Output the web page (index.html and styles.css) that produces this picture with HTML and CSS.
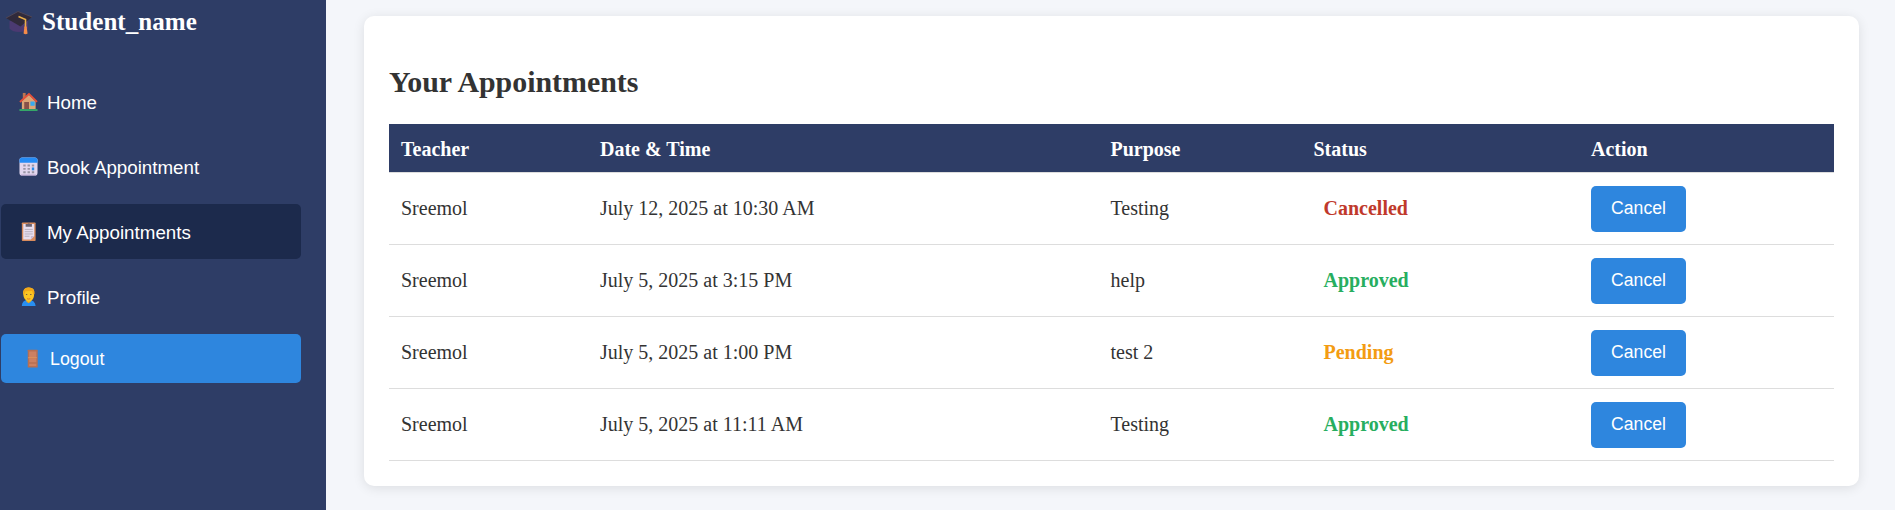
FILE: index.html
```html
<!DOCTYPE html>
<html lang="en">
<head>
<meta charset="utf-8">
<title>Your Appointments</title>
<link rel="stylesheet" href="styles.css">
</head>
<body>
<div class="layout">
  <aside class="sidebar">
    <h2 class="brand">
      <svg class="brand-icon" viewBox="0 0 26 24">
        <path d="M3.500 10v7.500q3 3.500 9.500 3.500t9-3.500V9z" fill="#4b3a72"/>
        <path d="M0 7 12 0.500 26 6 14.500 15.500z" fill="#302a3b"/>
        <path d="M0 7 12 0.500 26 6" fill="none" stroke="#594b55" stroke-width=".8"/>
        <path d="M12.500 5.500 19.500 8.500V17" fill="none" stroke="#e8ae48" stroke-width="1.600"/>
        <path d="M18.400 15.500h2.200l1 7q-2 1.500-4 0z" fill="#f58b49"/>
      </svg>
      <span>Student_name</span>
    </h2>
    <nav class="nav">
      <a class="nav-item">
        <svg class="nav-icon" viewBox="0 0 20 20">
          <path d="M4 1h3v6H4z" fill="#bd7450"/>
          <path d="M3 9.500 10.500 3 17.500 10v8H3z" fill="#dda576"/>
          <path d="M1 10.500 10.500 2l8.500 8.500" fill="none" stroke="#e94f38" stroke-width="1.900"/>
          <path d="M5.500 10.500h5V18h-5z" fill="#895149"/>
          <path d="M12 10h4.500v4.500H12z" fill="#36aaf0"/>
          <path d="M.500 18h19v2H.500z" fill="#35a768"/>
        </svg>
        <span class="nav-label">Home</span>
      </a>
      <a class="nav-item">
        <svg class="nav-icon" viewBox="0 0 20 20">
          <rect x=".500" y=".500" width="19" height="19" rx="3" fill="#e2d7ee"/>
          <path d="M.500 6V3.500q0-3 3-3h13q3 0 3 3V6z" fill="#258cf5"/>
          <path d="M2 19h16" stroke="#b9a1cb"/>
          <path d="M4.500 8H7v2H4.500zM9 8h2.500v2H9zM13.500 8H16v2h-2.500zM4.500 11.500H7v2H4.500zM9 11.500h2.500v2H9zM4.500 15H7v2H4.500zM9 15h2.500v2H9zM13.500 15H16v2h-2.500z" fill="#9995a5"/>
          <path d="M13.500 11H16v3h-2.500z" fill="#2889e8"/>
        </svg>
        <span class="nav-label">Book Appointment</span>
      </a>
      <a class="nav-item active">
        <svg class="nav-icon" viewBox="0 0 20 20">
          <rect x="3" y=".500" width="14.500" height="19.500" rx=".8" fill="#d88b5c"/>
          <path d="M4.500 2.200H16V15l-3.500 3.500h-8z" fill="#e7deef"/>
          <path d="M12.500 14.800H16l-3.500 3.600z" fill="#c9bad4"/>
          <path d="M7 2h2q1.300-1.500 2.600 0h2v3H7z" fill="#6b6371"/>
          <path d="M6 7.800h8.500M6 10.200h8.500M6 12.600h8.500M6 15h5" stroke="#b6aebd"/>
        </svg>
        <span class="nav-label">My Appointments</span>
      </a>
      <a class="nav-item">
        <svg class="nav-icon" viewBox="0 0 20 20">
          <path d="M3 20q0-6 7-6.500 7 .5 7.500 6.500z" fill="#298ff1"/>
          <path d="M7.800 12h4.600v3.500L10.100 17l-2.300-1.500z" fill="#eea51c"/>
          <path d="M4.500 8Q3.500.8 10 .6q7-.3 6 6.400-.2 7.500-5.500 8.500Q5 14.500 4.500 8z" fill="#fcc521"/>
          <path d="M4.500 7Q4 1.200 9.500.6q7-.4 6.800 6.400l-1.200 1-1.300-3.800-7 .3L5.500 8z" fill="#f2a719"/>
          <path d="M7.300 7.800h1.400M11.700 7.800h1.400" stroke="#7a5c49" stroke-width="1.100"/>
          <path d="M8.500 12.300q1.700.8 3.400 0" fill="none" stroke="#dc7529"/>
        </svg>
        <span class="nav-label">Profile</span>
      </a>
      <button class="logout">
        <svg class="nav-icon" viewBox="0 0 20 20">
          <rect x="5" y=".800" width="10.500" height="18.800" rx=".5" fill="#b66f53"/>
          <path d="M6.500 2.500H14v5.800H6.500zM6.500 10H14v4H6.500zM6.500 15.500H14V18H6.500z" fill="#cb8062"/>
          <path d="M5.500 9.200h9" stroke="#e89b60"/>
        </svg>
        <span>Logout</span>
      </button>
    </nav>
  </aside>
  <main class="main">
    <section class="card">
      <h2 class="card-title">Your Appointments</h2>
      <table class="appointments">
        <colgroup><col class="col-teacher"><col class="col-date"><col class="col-purpose"><col class="col-status"><col></colgroup>
        <thead>
          <tr><th>Teacher</th><th>Date &amp; Time</th><th>Purpose</th><th>Status</th><th>Action</th></tr>
        </thead>
        <tbody>
          <tr><td>Sreemol</td><td>July 12, 2025 at 10:30 AM</td><td>Testing</td><td><span class="status cancelled">Cancelled</span></td><td><button class="cancel">Cancel</button></td></tr>
          <tr><td>Sreemol</td><td>July 5, 2025 at 3:15 PM</td><td>help</td><td><span class="status approved">Approved</span></td><td><button class="cancel">Cancel</button></td></tr>
          <tr><td>Sreemol</td><td>July 5, 2025 at 1:00 PM</td><td>test 2</td><td><span class="status pending">Pending</span></td><td><button class="cancel">Cancel</button></td></tr>
          <tr><td>Sreemol</td><td>July 5, 2025 at 11:11 AM</td><td>Testing</td><td><span class="status approved">Approved</span></td><td><button class="cancel">Cancel</button></td></tr>
        </tbody>
      </table>
    </section>
  </main>
</div>
</body>
</html>
```
FILE: styles.css
```css
* { box-sizing: border-box; }

body {
  margin: 0;
  background: #f4f6fa;
  color: #333;
  font-family: "Liberation Serif", "Times New Roman", serif;
  font-size: 20px;
}

.layout {
  display: flex;
  height: 510px;
  overflow: hidden;
}

.sidebar {
  flex: none;
  width: 326px;
  padding: 8px 25px 0 1px;
  background: #2e3d66;
  color: #fff;
}

.brand {
  display: flex;
  gap: 10px;
  margin: 0 0 38px;
  padding-left: 5px;
  font-size: 25px;
  line-height: 28px;
  letter-spacing: 0.05px;
}

.brand-icon {
  flex: none;
  width: 26px;
  height: 24px;
  margin-top: 3px;
}

.nav {
  display: flex;
  flex-direction: column;
  gap: 10px;
}

.nav-item,
.logout {
  display: flex;
  align-items: center;
  gap: 8px;
  height: 55px;
  padding: 0 18px;
  border-radius: 5px;
  color: #fff;
  font: 18.75px/22px "Liberation Sans", Arial, sans-serif;
}

.nav-item.active { background: #1c2a4c; }

.nav-icon {
  flex: none;
  width: 19px;
  height: 19px;
  margin-right: 1px;
}

.nav-label { padding-top: 2px; }

.logout {
  width: 100%;
  height: 49px;
  padding: 0 22px;
  gap: 7px;
  border: 0;
  background: #2e86de;
  font-size: 17.8px;
}

.main {
  flex: 1;
  padding: 16px 36px 24px 38px;
}

.card {
  height: 470px;
  padding: 49px 25px 25px;
  border-radius: 10px;
  background: #fff;
  box-shadow: 0 2px 12px rgba(0, 0, 0, 0.1);
}

.card-title {
  margin: 0 0 25px;
  font-size: 29.9px;
  line-height: 34px;
}

.appointments {
  width: 100%;
  border-collapse: separate;
  border-spacing: 0;
  table-layout: fixed;
}

.col-teacher { width: 199px; }
.col-date { width: 510.5px; }
.col-purpose { width: 203px; }
.col-status { width: 277.5px; }

.appointments th,
.appointments td {
  padding: 0 12px;
  border-bottom: 1px solid #ddd;
  text-align: left;
  line-height: 24px;
}

.appointments th {
  height: 49px;
  padding-top: 2px;
  background: #2e3d66;
  background-clip: padding-box;
  color: #fff;
}

.appointments td {
  height: 72px;
  padding-bottom: 1px;
}

.status {
  padding: 0 10px;
  font-weight: bold;
}

.cancelled { color: #c0392b; }
.approved { color: #27ae60; }
.pending { color: #f39c12; }

.cancel {
  display: block;
  width: 95px;
  height: 46px;
  margin-top: 2px;
  padding: 0 0 3px;
  border: 0;
  border-radius: 5px;
  background: #2e86de;
  color: #fff;
  font: 17.6px/22px "Liberation Sans", Arial, sans-serif;
}
```
